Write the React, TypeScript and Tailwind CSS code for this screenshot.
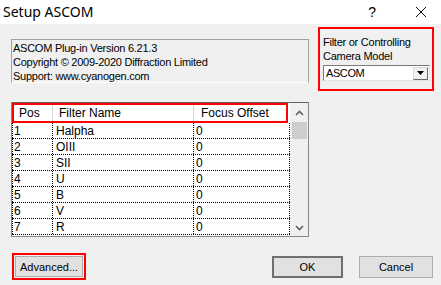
import React from "react";

const rows = [
  { pos: "1", name: "Halpha", offset: "0" },
  { pos: "2", name: "OIII", offset: "0" },
  { pos: "3", name: "SII", offset: "0" },
  { pos: "4", name: "U", offset: "0" },
  { pos: "5", name: "B", offset: "0" },
  { pos: "6", name: "V", offset: "0" },
  { pos: "7", name: "R", offset: "0" },
];

function Chevron({ up }: { up?: boolean }) {
  return (
    <svg width="9" height="6" viewBox="0 0 9 6">
      <path
        d={up ? "M1 5 L4.5 1.5 L8 5" : "M1 1 L4.5 4.5 L8 1"}
        fill="none"
        stroke="#606060"
        strokeWidth="1.6"
      />
    </svg>
  );
}

export default function App() {
  return (
    <div
      className="w-[441px] h-[285px] flex flex-col overflow-hidden text-black"
      style={{ fontFamily: '"Liberation Sans", Arial, sans-serif' }}
    >
      {/* Title bar */}
      <div className="h-[24px] bg-white flex items-center shrink-0">
        <span className="pl-[3px] text-[14px] leading-none" style={{ fontFamily: '"Noto Sans", "Liberation Sans", sans-serif' }}>
          Setup ASCOM
        </span>
        <span className="ml-auto text-[14px] mr-[39px]">?</span>
        <svg width="12" height="12" viewBox="0 0 12 12" className="mr-[14px]">
          <path d="M1 1 L11 11 M11 1 L1 11" stroke="#111" strokeWidth="1" />
        </svg>
      </div>

      {/* Body */}
      <div className="flex-1 bg-[#f0f0f0] pl-[11px] text-[11px] leading-[14px] tracking-[-0.25px]">
        <div className="flex items-start">
          <div className="mt-[15px] w-[298px] h-[44px] border border-[#a0a0a0] border-b-white pl-[1px] pt-[1px]">
            <div>ASCOM Plug-in Version 6.21.3</div>
            <div className="-mt-[0.5px]">Copyright © 2009-2020 Diffraction Limited</div>
            <div>Support: www.cyanogen.com</div>
          </div>
          <div className="ml-[9px] mt-[3px] w-[116px] h-[64px] border-2 border-[#ff0000] pl-[3px] pt-[6px]">
            <div>Filter or Controlling</div>
            <div>Camera Model</div>
            <div className="mt-[2px] w-[107px] h-[16px] bg-white border border-[#7a7a7a] border-r-[#e3e3e3] border-b-[#e3e3e3] flex items-center">
              <span className="pl-[2px] flex-1 tracking-[-0.4px]">ASCOM</span>
              <div className="w-[15px] h-[13px] mr-[1px] bg-[#f0f0f0] border border-[#dcdcdc] border-r-[#696969] border-b-[#696969] flex items-center justify-center">
                <svg width="7" height="4" viewBox="0 0 7 4">
                  <path d="M0 0 H7 L3.5 4 Z" fill="#000" />
                </svg>
              </div>
            </div>
          </div>
        </div>

        {/* Table */}
        <div className="mt-[11px] w-[298px] h-[135px] border border-[#828790] border-t-[#646464] flex bg-white text-[12px] tracking-normal">
          <div className="w-[278px] flex flex-col">
            <div className="w-[276px] h-[20px] border-2 border-[#ff0000] flex items-center">
              <div className="w-[39px] h-full flex items-center pl-[5px] border-r border-[#d5d5d5]">Pos</div>
              <div className="w-[141px] h-full flex items-center pl-[6px] border-r border-[#d5d5d5]">Filter Name</div>
              <div className="flex-1 h-full flex items-center pl-[7px]">Focus Offset</div>
            </div>
            {rows.map((r) => (
              <div key={r.pos} className="h-[16px] flex border-b border-dotted border-black">
                <div className="w-[41px] pl-[1px] border-l border-r border-dotted border-black flex items-center">{r.pos}</div>
                <div className="w-[141px] pl-[3px] border-r border-dotted border-black flex items-center">{r.name}</div>
                <div className="flex-1 pl-[2px] border-r border-dotted border-black flex items-center">{r.offset}</div>
              </div>
            ))}
          </div>
          <div className="w-[18px] bg-[#f0f0f0] flex flex-col items-center">
            <div className="h-[19px] flex items-center justify-center">
              <Chevron up />
            </div>
            <div className="w-[15px] h-[17px] bg-[#cdcdcd]" />
            <div className="flex-1" />
            <div className="h-[17px] flex items-center justify-center">
              <Chevron />
            </div>
          </div>
        </div>

        {/* Buttons */}
        <div className="mt-[16px] flex items-center pr-[8px] tracking-normal">
          <div className="ml-[1px] w-[74px] h-[27px] border-2 border-[#ff0000] p-[1px]">
            <button className="w-full h-full bg-[#e1e1e1] border border-[#adadad] flex items-center justify-center">
              Advanced...
            </button>
          </div>
          <button className="ml-auto mt-[1px] w-[71px] h-[22px] bg-[#e1e1e1] border-2 border-[#6f6f6f] flex items-center justify-center">
            OK
          </button>
          <button className="ml-[16px] mt-[1px] w-[74px] h-[22px] bg-[#e1e1e1] border border-[#adadad] flex items-center justify-center">
            Cancel
          </button>
        </div>
      </div>
    </div>
  );
}
